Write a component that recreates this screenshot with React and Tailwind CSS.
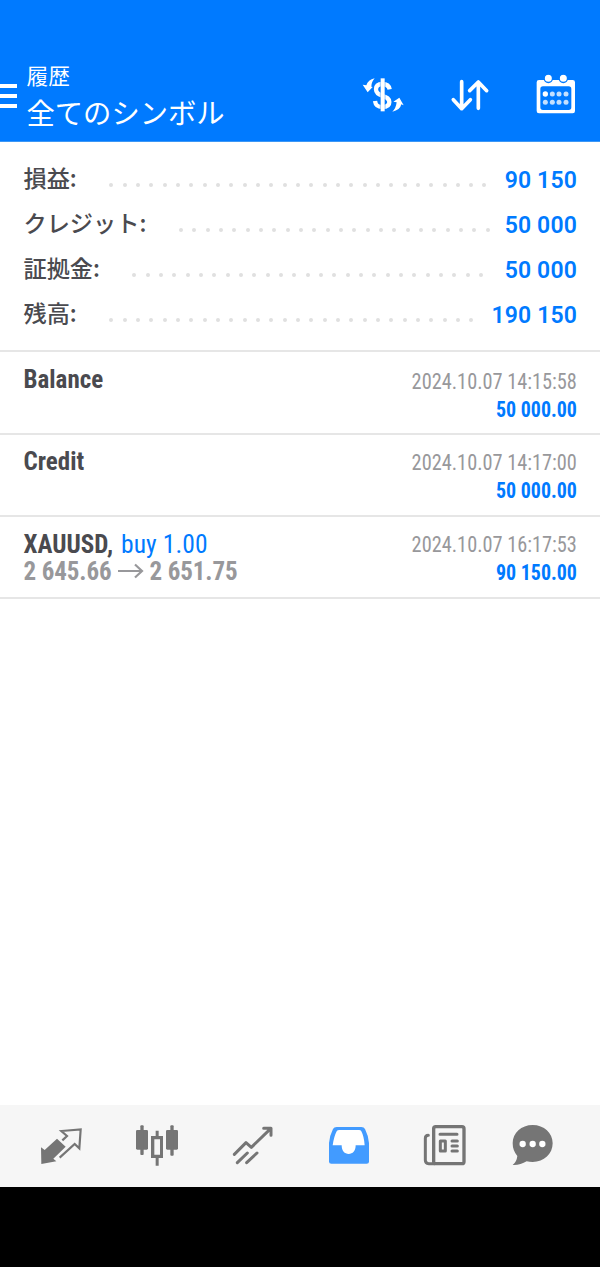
import React from 'react';

const summary = [
    { label: '損益:', value: '90 150', labelWidth: 'w-[85.3px]', dots: 29 },
    { label: 'クレジット:', value: '50 000', labelWidth: 'w-[155px]', dots: 24 },
    { label: '証拠金:', value: '50 000', labelWidth: 'w-[108.3px]', dots: 27 },
    { label: '残高:', value: '190 150', labelWidth: 'w-[85.3px]', dots: 28 },
];

const deals = [
    { symbol: 'Balance', time: '2024.10.07 14:15:58', profit: '50 000.00' },
    { symbol: 'Credit', time: '2024.10.07 14:17:00', profit: '50 000.00' },
    { symbol: 'XAUUSD,', side: 'buy 1.00', open: '2 645.66', close: '2 651.75', time: '2024.10.07 16:17:53', profit: '90 150.00' },
];

const Header = () => (
    <header className="flex h-[142px] shrink-0 items-start border-b border-[#3d97f5] bg-[#007aff] pr-5 text-white">
        <button className="mt-[84px] flex w-[17px] flex-col gap-1.5">
            <span className="h-1 w-full bg-white" />
            <span className="h-1 w-full bg-white" />
            <span className="h-1 w-full bg-white" />
        </button>
        <div className="mt-[60px] ml-[9.5px] flex-1 font-['Noto_Sans_CJK_JP',sans-serif]">
            <div className="text-[21.7px] leading-[29px]">履歴</div>
            <h1 className="text-[28.3px] leading-[45px] whitespace-nowrap">全てのシンボル</h1>
        </div>
        <div className="mt-[71px] flex">
            {/* Currency */}
            <svg className="h-12 w-12" viewBox="57 33 144 144" fill="none" stroke="currentColor">
                <path d="M149 88C147 77 140 72 127 72C113 72 108 79 108 88C108 99 115 102 127 107C141 112 148 116 148 126C148 136 141 141 127 141C113 141 107 136 105 123" strokeWidth="13" />
                <path d="M128 53V156" stroke="#007aff" strokeWidth="17" strokeOpacity="0.5" />
                <path d="M128 55V154" strokeWidth="12" />
                <path d="M68 74L79 76Q84 60 104 55Q94 66 94 80L98 81L83 97Z" fill="currentColor" stroke="none" />
                <path d="M160 125L178 113L191 136L184 133Q180 151 157 155Q168 145 170 127Z" fill="currentColor" stroke="none" />
            </svg>
            {/* Sort */}
            <svg className="ml-[39px] h-12 w-12" viewBox="318 33 144 144" fill="none" stroke="currentColor" strokeWidth="11" strokeLinecap="round" strokeLinejoin="round">
                <path d="M365 65V146M340 119L365 146L391 119" />
                <path d="M415 145V66M389 92L415 66L440 92" />
            </svg>
            {/* Calendar */}
            <svg className="ml-[38px] h-12 w-12" viewBox="576 33 144 144" fill="currentColor">
                <path fillRule="evenodd" d="M597 60H698Q705 60 705 67V153Q705 160 698 160H597Q590 160 590 153V67Q590 60 597 60ZM609 79Q601 79 601 87V142Q601 150 609 150H686Q694 150 694 142V87Q694 79 686 79Z" />
                <circle cx="625" cy="55" r="12.5" stroke="#007aff" strokeWidth="4" />
                <circle cx="670" cy="55" r="12.5" stroke="#007aff" strokeWidth="4" />
                <circle cx="616" cy="102" r="8" />
                <g fill="#c3e0ff">
                    <circle cx="637" cy="102" r="7.5" />
                    <circle cx="657" cy="102" r="7.5" />
                    <circle cx="678" cy="102" r="7.5" />
                    <circle cx="616" cy="127" r="7.5" />
                    <circle cx="637" cy="127" r="7.5" />
                    <circle cx="657" cy="127" r="7.5" />
                    <circle cx="678" cy="127" r="7.5" />
                </g>
            </svg>
        </div>
    </header>
);

const Summary = () => (
    <section className="h-[208px] shrink-0 pt-[15px] pr-[23px] pl-6">
        {summary.map((row) => (
            <div key={row.label} className="flex h-[45px] items-center">
                <span className={`${row.labelWidth} -ml-[0.5px] shrink-0 pb-[5px] font-['Noto_Sans_CJK_JP',sans-serif] text-[23.2px] leading-8 font-medium whitespace-nowrap text-[#4a4a4f]`}>{row.label}</span>
                <span className="mt-[11px] ml-[0.5px] flex gap-[9.333px]">
                    {Array.from({ length: row.dots }, (_, i) => (
                        <span key={i} className="h-1 w-1 rounded-full bg-[#e0e0e0]" />
                    ))}
                </span>
                <span className="ml-auto pt-[3px] font-[Roboto,sans-serif] text-[23px] leading-8 font-semibold tracking-[0.15px] whitespace-nowrap text-[#007aff]">{row.value}</span>
            </div>
        ))}
    </section>
);

const Deal = ({ deal }) => (
    <li className="flex h-[81.8px] justify-between border-b-2 border-[#e6e6e6] pt-[12.6px] pr-[23px] pl-[23.5px]">
        <div className="text-[25px] leading-7">
            <div className="h-7 whitespace-nowrap">
                <span className="font-bold text-[#4a4a4f]">{deal.symbol}</span>
                {deal.side && <span className="ml-0.5 text-[25.5px] tracking-[0.1px] text-[#007aff]"> {deal.side}</span>}
            </div>
            {deal.open && (
                <div className="flex items-center font-bold tracking-[-0.1px] whitespace-nowrap text-[#98989b]">
                    {deal.open}
                    <svg className="mx-[6px] mb-0.5 h-4 w-[26px]" viewBox="0 0 26 16" fill="none" stroke="currentColor" strokeWidth="2.2">
                        <path d="M0 8H24M17 1.5L24 8L17 14.5" />
                    </svg>
                    {deal.close}
                </div>
            )}
        </div>
        <div className="pt-[1.6px] text-right text-[21.5px] leading-7 whitespace-nowrap">
            <div className="origin-right scale-x-[0.945] text-[#98989b]">{deal.time}</div>
            <div className="origin-right scale-x-[0.927] font-bold text-[#007aff]">{deal.profit}</div>
        </div>
    </li>
);

const TabBar = () => (
    <nav className="flex h-[82px] shrink-0 items-start gap-12 bg-[#f6f6f6] pt-4 pl-[37px] text-[#757575]">
        {/* Quotes */}
        <svg className="h-12 w-12 shrink-0" viewBox="111 78 144 144" fill="none" stroke="currentColor">
            <path d="M123 157L134 165L171 131L197 155L160 191L169 199L124 207Z" fill="currentColor" stroke="none" />
            <path d="M187 136L201 123L184 108L242 103L238 160L224 147L179 188" strokeWidth="6.5" />
        </svg>
        {/* Charts */}
        <svg className="h-12 w-12 shrink-0" viewBox="399 78 144 144" fill="currentColor">
            <rect x="408" y="105" width="36" height="59" rx="4" />
            <rect x="421" y="91" width="10" height="89" rx="3" />
            <rect x="498" y="105" width="36" height="59" rx="4" />
            <rect x="511" y="91" width="10" height="91" rx="3" />
            <path fillRule="evenodd" d="M467 107H476V123H489V189H476V212H467V189H453V123H467ZM463 133V179H480V133Z" />
        </svg>
        {/* Trade */}
        <svg className="h-12 w-12 shrink-0" viewBox="687 78 144 144" fill="none" stroke="currentColor" strokeWidth="9" strokeLinecap="round" strokeLinejoin="round">
            <path d="M703 178L738 143L754 157L812 101M791 100H813V121" />
            <path d="M712 203L742 174M740 203L771 174" />
        </svg>
        {/* History */}
        <svg className="h-12 w-12 shrink-0 text-[#429bff]" viewBox="75 78 144 144" fill="currentColor">
            <path d="M110 96H184Q192 96 195 102Q206 124 207 144V200Q207 206 200 206H94Q87 206 87 200V144Q88 124 99 102Q102 96 110 96Z" />
            <path d="M118 105Q112 105 110 109Q102 124 98 151H125C125 168 134 177 146 177C158 177 167 168 167 151H194Q192 124 184 109Q182 105 177 105Z" fill="#fff" />
        </svg>
        {/* News */}
        <svg className="h-12 w-12 shrink-0" viewBox="363 78 144 144" fill="none" stroke="currentColor" strokeWidth="9" strokeLinecap="round">
            <rect x="401" y="95" width="91" height="111" rx="6" strokeWidth="10" />
            <path d="M385 121Q376 121 376 130V196Q376 206 386 206H402" />
            <path d="M420 118H471M456 138H472M456 153H472M456 168H472" />
            <rect x="421" y="138" width="15" height="30" strokeLinejoin="round" />
        </svg>
        {/* Messages */}
        <svg className="-ml-[9px] h-12 w-12 shrink-0" viewBox="624 78 144 144" fill="currentColor">
            <path d="M698 90C732 90 758 114 758 145C758 177 732 201 698 201Q688 201 680 199Q661 211 638 210Q650 201 652 183Q638 167 638 145C638 114 664 90 698 90Z" />
            <g fill="#fff">
                <circle cx="668" cy="147" r="9.5" />
                <circle cx="698" cy="147" r="9.5" />
                <circle cx="727" cy="147" r="9.5" />
            </g>
        </svg>
    </nav>
);

const App = () => (
    <div className="flex h-[1267px] w-[600px] flex-col overflow-hidden bg-white">
        <Header />
        <Summary />
        <ul className="flex-1 border-t-2 border-[#e6e6e6] pt-[1.4px] font-['Roboto_Condensed',Roboto,sans-serif] font-stretch-condensed">
            {deals.map((deal) => (
                <Deal key={deal.time} deal={deal} />
            ))}
        </ul>
        <TabBar />
        <div className="h-20 shrink-0 bg-black" />
    </div>
);

export default App;
